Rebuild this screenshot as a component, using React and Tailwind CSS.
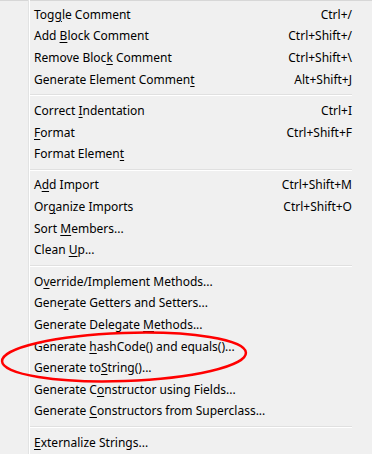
import React from "react";

const groups = [
  [
    ["Toggle Comment", 3, "Ctrl+/"],
    ["Add Block Comment", 4, "Ctrl+Shift+/"],
    ["Remove Block Comment", 11, "Ctrl+Shift+\\"],
    ["Generate Element Comment", 23, "Alt+Shift+J"],
  ],
  [
    ["Correct Indentation", 8, "Ctrl+I"],
    ["Format", 0, "Ctrl+Shift+F"],
    ["Format Element", 13, ""],
  ],
  [
    ["Add Import", 1, "Ctrl+Shift+M"],
    ["Organize Imports", 2, "Ctrl+Shift+O"],
    ["Sort Members...", 5, ""],
    ["Clean Up...", 6, ""],
  ],
  [
    ["Override/Implement Methods...", 1, ""],
    ["Generate Getters and Setters...", 4, ""],
    ["Generate Delegate Methods...", 18, ""],
    ["Generate hashCode() and equals()...", 9, ""],
    ["Generate toString()...", 11, ""],
    ["Generate Constructor using Fields...", 10, ""],
    ["Generate Constructors from Superclass...", 9, ""],
  ],
  [["Externalize Strings...", 0, ""]],
];

function Label({ text, u }) {
  return (
    <span>
      {text.slice(0, u)}
      <span className="underline underline-offset-[2px]">{text[u]}</span>
      {text.slice(u + 1)}
    </span>
  );
}

export default function App() {
  return (
    <div
      className="relative w-[372px] h-[454px] overflow-hidden bg-[#f0f0f0] text-[12px] text-[#000000]"
      style={{ fontFamily: '"Noto Sans", "Open Sans", sans-serif' }}
    >
      <div className="absolute left-[28px] top-0 bottom-0 w-[2px] flex">
        <div className="w-px bg-[#e2e3e3]" />
        <div className="w-px bg-white" />
      </div>
      <div className="border-t border-[#d7d7d7] pt-[3px] pr-[20px]">
        {groups.map((g, gi) => (
          <div key={gi}>
            {gi > 0 && (
              <div className="h-[9.5px] flex flex-col justify-center pl-[30px]">
                <div className="h-px bg-[#e0e0e0]" />
                <div className="h-px bg-white" />
              </div>
            )}
            {g.map(([t, u, s]) => (
              <div key={t} className="h-[21.67px] flex items-center justify-between pl-[34px] leading-none">
                <Label text={t} u={u} />
                <span>{s}</span>
              </div>
            ))}
          </div>
        ))}
      </div>
      <svg className="absolute left-0 top-0 pointer-events-none" width="372" height="454">
        <ellipse cx="124" cy="357" rx="122" ry="24" fill="none" stroke="#ff0000" strokeWidth="2.5" transform="rotate(-2 124 357)" />
      </svg>
    </div>
  );
}
